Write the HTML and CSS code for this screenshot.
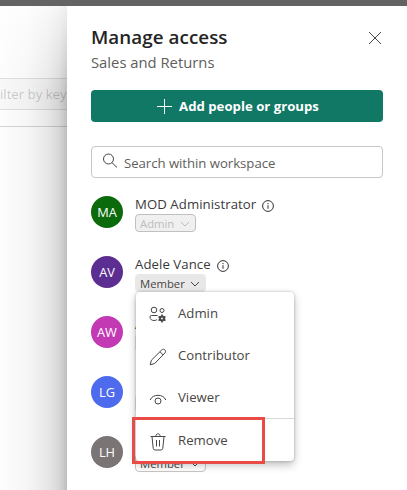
FILE: index.html
```html
<!DOCTYPE html>
<html lang="en">
<head>
<meta charset="utf-8">
<title>Manage access</title>
<link rel="stylesheet" href="styles.css">
</head>
<body>
<div class="topbar"></div>
<div class="stage">
  <div class="backdrop">
    <div class="filter">ilter by key</div>
    <div class="rule"></div>
  </div>
  <aside class="panel">
    <header class="head">
      <div>
        <h1>Manage access</h1>
        <p class="sub">Sales and Returns</p>
      </div>
      <svg class="close" width="14" height="14" viewBox="0 0 14 14"><path d="M1 1l12 12M13 1L1 13"/></svg>
    </header>
    <button class="add"><svg width="16" height="16" viewBox="0 0 16 16"><path d="M8.500 1v15M1 8.500h15"/></svg><span>Add people or groups</span></button>
    <div class="search"><svg width="16" height="16" viewBox="0 0 16 16"><circle cx="6.500" cy="6" r="5"/><path d="M10 9.700l5 4.800"/></svg><span>Search within workspace</span></div>
    <ul class="people">
      <li class="person">
        <span class="avatar ma">MA</span>
        <div class="info">
          <div class="name"><span class="n1">MOD Administrator</span><svg class="i" width="12" height="12" viewBox="0 0 12 12"><circle cx="6" cy="6" r="5.400"/><path d="M6 5.200v3.600M6 3v1.200"/></svg></div>
          <span class="role off">Admin<svg width="10" height="6" viewBox="0 0 10 6"><path d="M1 1l4 4 4-4"/></svg></span>
        </div>
      </li>
      <li class="person">
        <span class="avatar av">AV</span>
        <div class="info">
          <div class="name"><span class="n2">Adele Vance</span><svg class="i" width="12" height="12" viewBox="0 0 12 12"><circle cx="6" cy="6" r="5.400"/><path d="M6 5.200v3.600M6 3v1.200"/></svg></div>
          <span class="role on">Member<svg width="10" height="6" viewBox="0 0 10 6"><path d="M1 1l4 4 4-4"/></svg></span>
          <div class="menu">
            <div class="item"><svg width="18" height="18" viewBox="0 0 18 18"><circle cx="5" cy="4" r="2.800"/><circle cx="13" cy="4.500" r="2"/><path d="M8.500 9.500H2.300Q1 9.500 1 11c0 2.500 2 3.500 4 3.500 1.200 0 2.200-.3 3-.8"/><g class="gear"><circle cx="13" cy="12.500" r="2.600"/><path d="M13 8.500v8M9.500 10.500l7 4M16.500 10.500l-7 4"/></g><circle class="hole" cx="13" cy="12.500" r=".9"/></svg><span>Admin</span></div>
            <div class="item"><svg width="18" height="18" viewBox="0 0 18 18"><path d="M1.200 16.800l1.200-4.600L12.800 1.900c2-1.900 5 .8 3.200 3L5.700 15.500zM11 3.800l3.200 3.200"/></svg><span>Contributor</span></div>
            <div class="item"><svg width="18" height="18" viewBox="0 0 18 18"><path d="M1.200 10C3.500 3.700 14.500 3.700 16.800 10"/><circle cx="9" cy="11" r="3"/></svg><span>Viewer</span></div>
            <div class="item last"><svg width="18" height="18" viewBox="0 0 18 18"><path d="M1.500 3.500h15M3 3.500l1.200 11.800q.2 1.700 2 1.700h5.600q1.800 0 2-1.700L15 3.500M6.800 3.500c0-3.600 4.400-3.600 4.400 0M7.500 7v6.500M10.500 7v6.500"/></svg><span>Remove</span></div>
            <div class="highlight"></div>
          </div>
        </div>
      </li>
      <li class="person">
        <span class="avatar aw">AW</span>
        <div class="info"><div class="name"><span>A</span></div><span class="role on"></span></div>
      </li>
      <li class="person">
        <span class="avatar lg">LG</span>
        <div class="info"><div class="name"></div><span class="role on"></span></div>
      </li>
      <li class="person">
        <span class="avatar lh">LH</span>
        <div class="info"><div class="name"></div><span class="role line">Member<svg width="10" height="6" viewBox="0 0 10 6"><path d="M1 1l4 4 4-4"/></svg></span></div>
      </li>
    </ul>
  </aside>
</div>
</body>
</html>
```
FILE: styles.css
```css
* { box-sizing: border-box; }
body {
  margin: 0;
  width: 407px;
  height: 490px;
  overflow: hidden;
  background: #fff;
  color: #3b3a39;
  font: 13.200px/20px "Open Sans", "Noto Sans", sans-serif;
}
svg { fill: none; stroke: #484644; stroke-width: 1; flex: none; display: block; }
h1, p, ul { margin: 0; padding: 0; list-style: none; }
.topbar { height: 6px; background: #636363; }
.stage { display: flex; height: 484px; }
.backdrop {
  width: 67px;
  flex: none;
  padding-top: 72px;
  overflow: hidden;
  white-space: nowrap;
  background:
    linear-gradient(180deg, rgba(255, 255, 255, .75) 0, rgba(255, 255, 255, 0) 90px),
    linear-gradient(90deg, #fdfdfd 0, #f6f6f6 40%, #e8e8e8 70%, #d7d7d7 88%, #bebebe 100%);
}
.filter {
  height: 32px;
  border: solid rgba(0, 0, 0, .1);
  border-width: 1px 0;
  background: rgba(0, 0, 0, .02);
  line-height: 31px;
  color: rgba(0, 0, 0, .2);
  letter-spacing: 0;
}
.rule { margin-top: 16px; height: 1px; background: rgba(0, 0, 0, .16); }
.panel { flex: 1; padding: 19px 24px 0; background: #fff; }
.head { display: flex; justify-content: space-between; height: 65px; }
h1 { font-size: 18.800px; line-height: 25px; font-weight: 600; color: #242424; white-space: nowrap; letter-spacing: .06px; }
.sub { font-size: 14.800px; line-height: 22px; color: #605e5c; margin-top: 1px; }
.close { margin: 6px 1px 0; }
.add {
  display: flex;
  align-items: center;
  justify-content: center;
  gap: 7px;
  width: 292px;
  height: 32px;
  padding: 0 0 0 1px;
  border: 0;
  border-radius: 4px;
  background: #117865;
  color: #fff;
  font: 700 13.200px/20px "Open Sans", sans-serif;
}
.add svg { stroke: #fff; }
.search {
  display: flex;
  align-items: center;
  gap: 6px;
  width: 292px;
  height: 32px;
  margin-top: 24px;
  padding-left: 10px;
  border: 1px solid #c8c6c4;
  border-radius: 4px;
  color: #605e5c;
  letter-spacing: -.04px;
}
.search span { margin-top: 1px; }
.search svg { margin-top: -3px; }
.people { padding-top: 18px; }
.person { display: flex; gap: 12px; height: 60px; }
.avatar {
  width: 32px;
  height: 32px;
  border-radius: 50%;
  color: #fff;
  font-size: 12.800px;
  font-weight: 500;
  line-height: 32px;
  text-align: center;
}
.ma { background: #0b6a0b; }
.av { background: #5c2e91; }
.aw { background: #c239b3; }
.lg { background: #4f6bed; }
.lh { background: #7a7574; }
.info { position: relative; margin-top: -2px; }
.name { display: flex; align-items: center; gap: 6px; height: 20px; white-space: nowrap; letter-spacing: .06px; }
.i { margin-top: 3px; stroke: #323130; }
.role {
  display: flex;
  align-items: center;
  justify-content: space-between;
  width: 71px;
  height: 18px;
  padding: 1px 5px 0 4px;
  border: 1px solid #e8e8e8;
  border-radius: 4px;
  background: #e8e8e8;
  color: #484644;
  font-size: 11.300px;
  line-height: 16px;
}
.off { width: 61px; border-color: #c0c0c0; background: #f0f0f0; color: #bdbdbd; }
.off svg { stroke: #bdbdbd; }
.line { border-color: #c8c6c4; background: #fff; }
.menu {
  position: absolute;
  z-index: 2;
  left: 1px;
  top: 38px;
  width: 158px;
  height: 169px;
  border-radius: 4px;
  background: #fff;
  box-shadow: 0 4px 8px rgba(0, 0, 0, .25), 0 0 3px rgba(0, 0, 0, .25);
}
.item { display: flex; align-items: center; gap: 11px; height: 42px; padding-left: 13px; color: #484644; }
.item svg { margin-top: 4px; }
.gear circle { fill: #484644; }
.gear path { stroke-width: 1.600; }
.item .hole { fill: #fff; stroke: none; }
.last { border-top: 1px solid #d8d8d8; height: 43px; }
.highlight {
  position: absolute;
  left: -4px;
  top: 125px;
  width: 133px;
  height: 47px;
  border: 3px solid #e94b46;
}
```
